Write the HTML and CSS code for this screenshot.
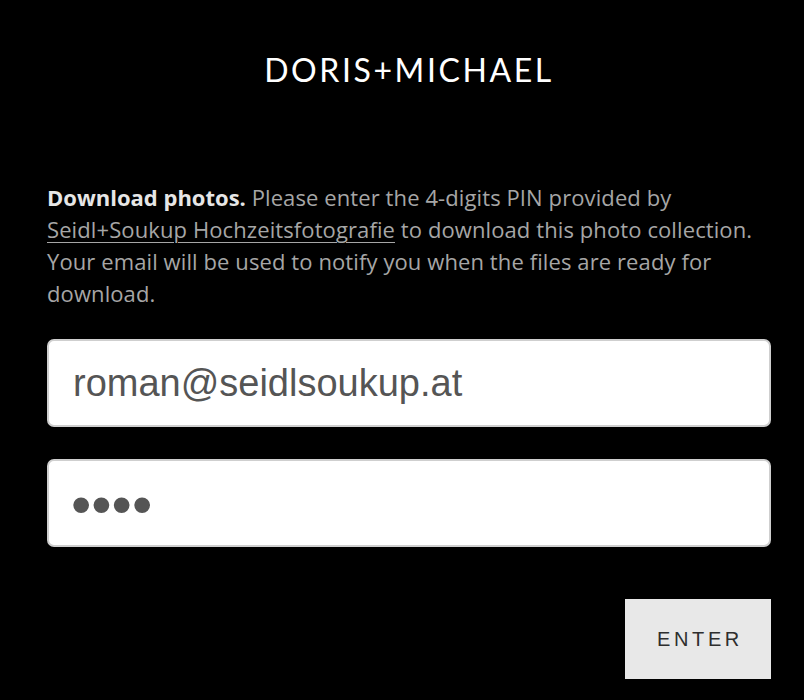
FILE: index.html
```html
<!DOCTYPE html>
<html>
<head>
<meta charset="utf-8">
<link rel="stylesheet" href="styles.css">
</head>
<body>
<div class="page">
  <h1 class="title">DORIS+MICHAEL</h1>
  <p class="intro"><strong>Download photos.</strong> Please enter the 4-digits PIN provided by <a href="#">Seidl+Soukup Hochzeitsfotografie</a> to download this photo collection. Your email will be used to notify you when the files are ready for download.</p>
  <form class="form">
    <input class="field" type="email" value="roman@seidlsoukup.at">
    <input class="field pin" type="password" value="1234">
    <div class="actions"><button class="enter" type="button">ENTER</button></div>
  </form>
</div>
</body>
</html>
```

FILE: styles.css
```css
html, body {
  margin: 0;
  padding: 0;
  background: #000;
}
.page {
  width: 724px;
  margin-left: 47px;
  font-family: "Open Sans", sans-serif;
}
.title {
  margin: 0;
  padding-top: 50px;
  text-align: center;
  font-family: "Lato", sans-serif;
  font-weight: 400;
  font-size: 32px;
  line-height: 40px;
  letter-spacing: 2.6px;
  color: #fff;
}
.intro {
  margin: 91px 0 0;
  font-size: 22px;
  line-height: 32px;
  letter-spacing: 0.1px;
  color: #a6a6a6;
}
.intro strong {
  color: #e6e6e6;
  font-weight: 700;
  letter-spacing: 0;
}
.intro a {
  color: #a6a6a6;
  text-decoration: underline;
  text-underline-offset: 4px;
  text-decoration-thickness: 1px;
}
.form {
  margin-top: 30px;
  display: flex;
  flex-direction: column;
  gap: 32px;
}
.field {
  box-sizing: border-box;
  width: 100%;
  height: 88px;
  margin: 0;
  padding: 0 24px;
  border: 2px solid #cfcfcf;
  border-radius: 7px;
  background: #fff;
  font-family: "Liberation Sans", sans-serif;
  font-size: 38px;
  color: #555;
  outline: none;
}
.pin {
  font-size: 58px;
  padding-left: 22px;
}
.actions {
  display: flex;
  justify-content: flex-end;
  margin-top: 20px;
}
.enter {
  width: 146px;
  height: 80px;
  border: 0;
  border-radius: 0;
  background: #e8e8e8;
  font-family: "Liberation Sans", sans-serif;
  font-size: 20px;
  letter-spacing: 3.6px;
  color: #2e2e2e;
  padding: 0 0 0 4px;
}
```
